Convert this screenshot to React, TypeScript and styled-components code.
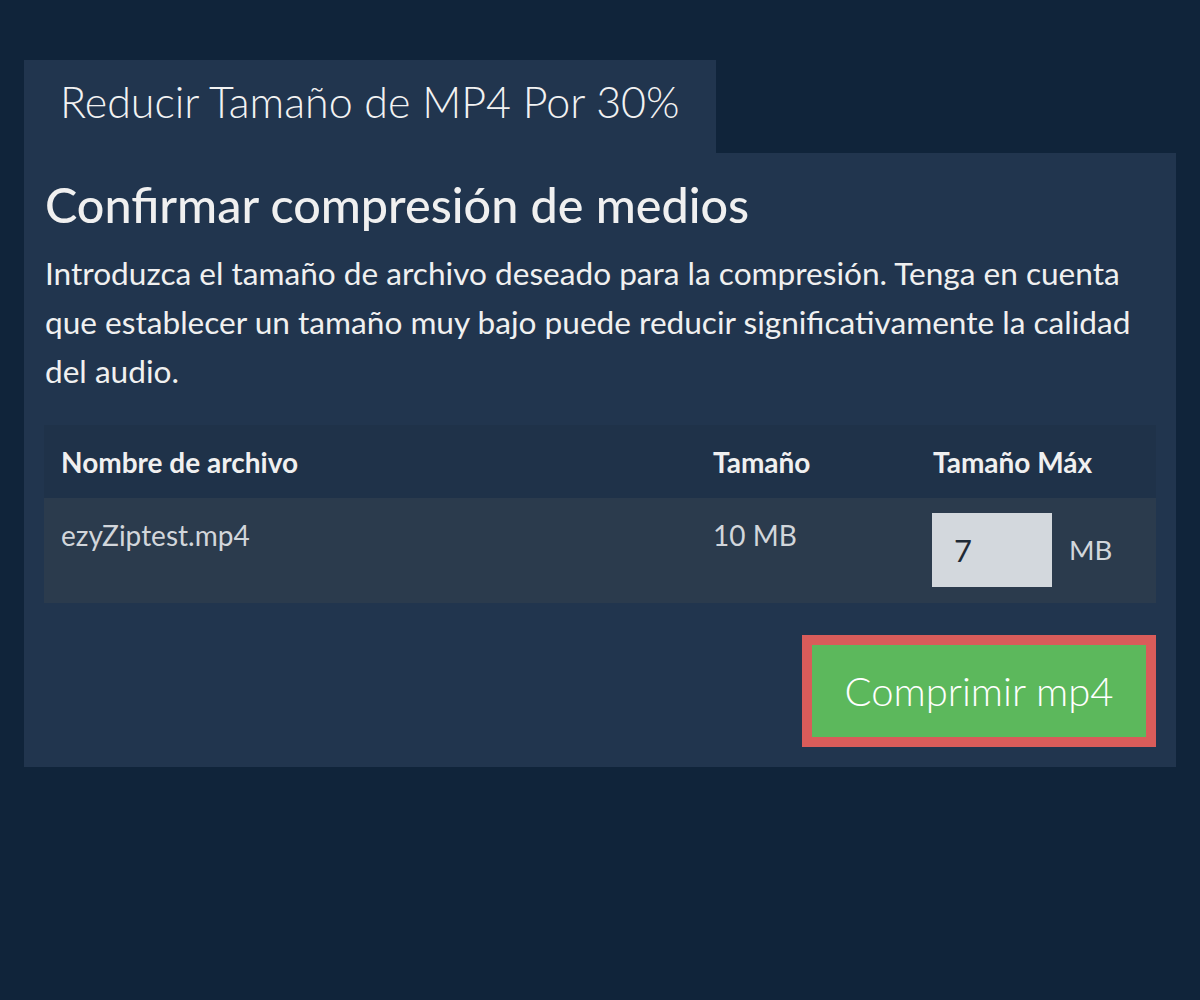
import React from 'react';
import styled, { createGlobalStyle } from 'styled-components';

const GlobalStyle = createGlobalStyle`
  html, body {
    margin: 0;
    padding: 0;
    background: #10243a;
    font-family: Lato, "Open Sans", sans-serif;
    color: #f0f0f0;
  }
`;

const Page = styled.div`
  width: 1200px;
  height: 1000px;
  box-sizing: border-box;
  padding: 60px 24px 0;
`;

const Tab = styled.div`
  display: inline-block;
  background: #21354e;
  padding: 0 36px 0 36px;
  height: 93px;
  line-height: 84px;
  font-size: 43px;
  font-weight: 300;
  color: #f2f2f2;
  white-space: nowrap;
`;

const Panel = styled.div`
  background: #21354e;
  padding: 20px;
`;

const Heading = styled.h2`
  margin: 0 0 0 1px;
  font-size: 48.5px;
  font-weight: 500;
  line-height: 62px;
`;

const Text = styled.p`
  margin: 14px 0 29px 1px;
  font-size: 31.6px;
  line-height: 49px;
`;

const Table = styled.table`
  width: 100%;
  border-collapse: collapse;
`;

const HeadCell = styled.th<{ w?: number }>`
  text-align: left;
  background: #1f3249;
  font-size: 28px;
  font-weight: 700;
  padding: 0 16px 0 17px;
  height: 73px;
  width: ${p => (p.w ? `${p.w}px` : 'auto')};
  box-sizing: border-box;
  white-space: nowrap;
`;

const Cell = styled.td`
  background: #2b3b4d;
  vertical-align: top;
  padding: 15px 16px 16px 17px;
  font-size: 28px;
  color: #d2d6db;
  line-height: 44px;
`;

const SizeBox = styled.div`
  display: flex;
  align-items: center;
  gap: 17px;
  margin-left: -1px;
`;

const SizeInput = styled.input`
  width: 120px;
  height: 74px;
  box-sizing: border-box;
  border: none;
  background: #d3d8dd;
  color: #1f2a36;
  font-family: Lato, sans-serif;
  font-size: 31px;
  padding: 0 22px;
  outline: none;
`;

const Unit = styled.span`
  font-size: 27.5px;
  color: #d2d6db;
`;

const Actions = styled.div`
  display: flex;
  justify-content: flex-end;
  margin-top: 32px;
`;

const Button = styled.button`
  width: 354px;
  height: 112px;
  box-sizing: border-box;
  border: 10px solid #d95c5a;
  background: #5cb85c;
  color: #ffffff;
  font-family: Lato, sans-serif;
  font-weight: 300;
  font-size: 40px;
  padding: 0;
  cursor: pointer;
`;

export default function App() {
  return (
    <>
      <GlobalStyle />
      <Page>
        <Tab>Reducir Tamaño de MP4 Por 30%</Tab>
        <Panel>
          <Heading>Confirmar compresión de medios</Heading>
          <Text>
            Introduzca el tamaño de archivo deseado para la compresión. Tenga en cuenta que
            establecer un tamaño muy bajo puede reducir significativamente la calidad del audio.
          </Text>
          <Table>
            <thead>
              <tr>
                <HeadCell w={652}>Nombre de archivo</HeadCell>
                <HeadCell w={220}>Tamaño</HeadCell>
                <HeadCell>Tamaño Máx</HeadCell>
              </tr>
            </thead>
            <tbody>
              <tr>
                <Cell>ezyZiptest.mp4</Cell>
                <Cell>10 MB</Cell>
                <Cell>
                  <SizeBox>
                    <SizeInput defaultValue="7" />
                    <Unit>MB</Unit>
                  </SizeBox>
                </Cell>
              </tr>
            </tbody>
          </Table>
          <Actions>
            <Button>Comprimir mp4</Button>
          </Actions>
        </Panel>
      </Page>
    </>
  );
}
